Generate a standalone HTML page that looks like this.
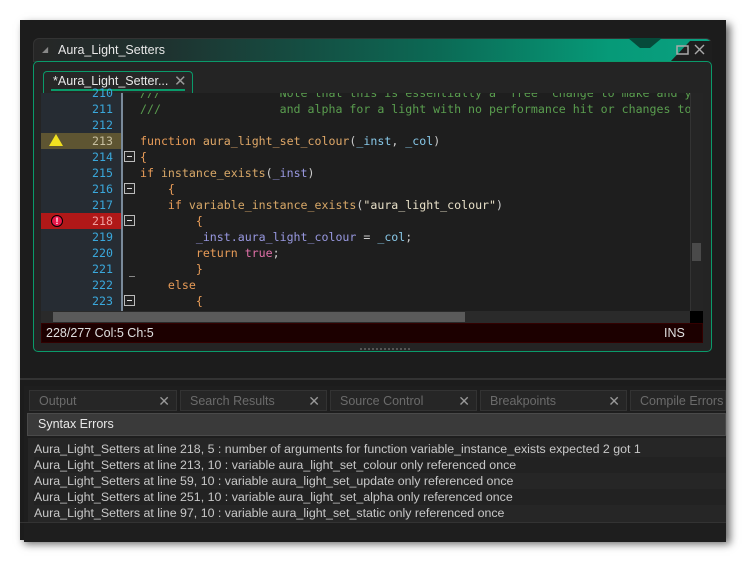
<!DOCTYPE html>
<html><head><meta charset="utf-8"><style>
*{margin:0;padding:0;box-sizing:border-box}
body{width:746px;height:561px;background:#fff;position:relative;overflow:hidden;font-family:"Liberation Sans","DejaVu Sans",sans-serif}
.abs{position:absolute}
#outer{left:20px;top:20px;width:706px;height:520px;background:#1c1c1c;box-shadow:4px 4px 8px rgba(0,0,0,.6)}
#title{left:33px;top:38px;width:679px;height:24px;border-radius:6px 6px 0 0;background:linear-gradient(90deg,#262626 0%,#1e3330 20%,#0b6a55 60%,#069a78 85%,#0aa080 100%);border:1px solid #333}
#title span{position:absolute;left:24px;top:4px;color:#e8e8e8;font-size:12.5px}
#panel{left:33px;top:61px;width:679px;height:291px;background:#242424;border:1.5px solid #0a9a6a;border-radius:5px}
.mono{font-family:"DejaVu Sans Mono","Liberation Mono",monospace;font-size:11.6px;white-space:pre}
.ln{position:absolute;left:41px;width:72px;text-align:right;color:#3aa8dc;height:16px;line-height:16px}
.cl{position:absolute;left:140px;height:16px;line-height:16px;color:#e89c58}
.fold{position:absolute;left:124px;width:11px;height:11px;border:1px solid #bbb;background:#222}
.fold:after{content:"";position:absolute;left:2px;top:4px;width:5px;height:1px;background:#ddd}
.tab{position:absolute;top:390px;height:21px;background:#262626;color:#6b6b6b;font-size:12.5px;line-height:20px;padding-left:9px;border:1px solid #333}
.tab b{position:absolute;right:6px;top:0;font-weight:normal;color:#999;font-size:14px}
.msg{position:absolute;left:34px;color:#c8c8c8;font-size:12.4px;height:16px;line-height:16px;width:692px;white-space:nowrap}
</style></head><body>
<div id="outer" class="abs"></div>
<div id="title" class="abs"><span style="left:8px;top:6px;font-size:8px;color:#888">◢</span><span>Aura_Light_Setters</span></div>
<svg class="abs" style="left:620px;top:38px" width="92" height="24"><polygon points="8,0 42,0 30,10 20,10" fill="#064a3a"/><polygon points="50,24 70,3 92,3 92,24" fill="#1e1e1e"/>
<rect x="57" y="8" width="11" height="8" fill="none" stroke="#aaa" stroke-width="1.5"/><path d="M75 7l9 9M84 7l-9 9" stroke="#aaa" stroke-width="1.4"/></svg>
<div id="panel" class="abs"></div>
<div class="abs" style="left:43px;top:71px;width:150px;height:22px;background:#262626;border:1px solid #0a9a6a;border-bottom:none;border-radius:4px 4px 0 0"></div>
<div class="abs" style="left:53px;top:74px;color:#e8e8e8;font-size:12.5px">*Aura_Light_Setter...</div>
<div class="abs" style="left:174px;top:72px;color:#999;font-size:15px">✕</div>
<div class="abs" style="left:51px;top:89px;width:134px;height:2px;background:#0a9a6a"></div>
<div class="abs" style="left:41px;top:93px;width:80px;height:218px;background:#262c33"></div>
<div class="abs" style="left:121px;top:93px;width:2px;height:218px;background:#7a8a9a"></div>
<div class="abs" style="left:129px;top:93px;width:1px;height:218px;background:#888"></div>
<div class="abs" style="left:123px;top:93px;width:567px;height:218px;background:#1e1e1e"></div>
<div class="abs" style="left:41px;top:133px;width:80px;height:16px;background:#5e5532"></div>
<div class="abs" style="left:49px;top:134px;width:0;height:0;border-left:7px solid transparent;border-right:7px solid transparent;border-bottom:12px solid #f0e020"></div>
<div class="abs" style="left:41px;top:213px;width:80px;height:16px;background:#b01818"></div>
<div class="abs" style="left:51px;top:215px;width:12px;height:12px;border-radius:50%;background:#e8184a;border:1px solid #000;color:#fff;font-size:9px;font-weight:bold;text-align:center;line-height:10px">!</div>
<div class="mono">
<div class="ln" style="top:85px">210</div><div class="ln" style="top:101px">211</div><div class="ln" style="top:117px">212</div><div class="ln" style="top:133px;color:#c8c0a0">213</div><div class="ln" style="top:149px">214</div><div class="ln" style="top:165px">215</div><div class="ln" style="top:181px">216</div><div class="ln" style="top:197px">217</div><div class="ln" style="top:213px;color:#f0a0a0">218</div><div class="ln" style="top:229px">219</div><div class="ln" style="top:245px">220</div><div class="ln" style="top:261px">221</div><div class="ln" style="top:277px">222</div><div class="ln" style="top:293px">223</div>
</div>
<div class="abs" style="left:123px;top:93px;width:567px;height:218px;overflow:hidden">
<div class="mono" style="position:relative;left:-123px;top:-93px">
<div class="cl" style="top:85px;color:#5a9e4f">///                 Note that this is essentially a "free" change to make and y</div>
<div class="cl" style="top:101px;color:#5a9e4f">///                 and alpha for a light with no performance hit or changes to</div>
<div class="cl" style="top:133px">function <span style="color:#e0a868">aura_light_set_colour</span><span style="color:#ccc">(</span><span style="color:#88c8e8">_inst</span><span style="color:#ccc">, </span><span style="color:#88c8e8">_col</span><span style="color:#ccc">)</span></div>
<div class="cl" style="top:149px">{</div>
<div class="cl" style="top:165px">if <span style="color:#d8a868">instance_exists</span><span style="color:#ccc">(</span><span style="color:#9898e0">_inst</span><span style="color:#ccc">)</span></div>
<div class="cl" style="top:181px">    {</div>
<div class="cl" style="top:197px">    if <span style="color:#d8a868">variable_instance_exists</span><span style="color:#ccc">(</span><span style="color:#e8e0c8">"aura_light_colour"</span><span style="color:#ccc">)</span></div>
<div class="cl" style="top:213px">        {</div>
<div class="cl" style="top:229px;color:#9898e0">        _inst.aura_light_colour <span style="color:#ccc">=</span> <span style="color:#88c8e8">_col</span><span style="color:#ccc">;</span></div>
<div class="cl" style="top:245px">        return <span style="color:#e070a8">true</span><span style="color:#ccc">;</span></div>
<div class="cl" style="top:261px">        }</div>
<div class="cl" style="top:277px">    else</div>
<div class="cl" style="top:293px">        {</div>
</div></div>
<div class="fold" style="top:151px"></div><div class="fold" style="top:183px"></div><div class="fold" style="top:215px"></div><div class="fold" style="top:295px"></div>
<div class="abs" style="left:129px;top:276px;width:6px;height:1px;background:#888"></div>
<div class="abs" style="left:690px;top:93px;width:13px;height:218px;background:#252525;border-left:1px solid #333"></div>
<div class="abs" style="left:692px;top:243px;width:9px;height:18px;background:#4a4a4a"></div>
<div class="abs" style="left:41px;top:311px;width:649px;height:12px;background:#2a2a2a"></div>
<div class="abs" style="left:53px;top:312px;width:412px;height:10px;background:#5a5a5a"></div>
<div class="abs" style="left:690px;top:311px;width:13px;height:12px;background:#000"></div>
<div class="abs" style="left:41px;top:323px;width:662px;height:20px;background:#1c0000;border:1px solid #300"></div>
<div class="abs" style="left:46px;top:326px;color:#e0e0e0;font-size:12.5px">228/277 Col:5 Ch:5</div>
<div class="abs" style="left:664px;top:326px;color:#e0e0e0;font-size:12.5px">INS</div>
<div class="abs" style="left:360px;top:348px;width:50px;height:2px;border-top:2px dotted #555"></div>
<div class="abs" style="left:20px;top:378px;width:706px;height:2px;background:#333"></div>
<div class="abs" style="left:24px;top:386px;width:702px;height:156px;background:#1e1e1e"></div>
<div class="tab" style="left:29px;width:148px">Output<b>✕</b></div>
<div class="tab" style="left:180px;width:147px">Search Results<b>✕</b></div>
<div class="tab" style="left:330px;width:147px">Source Control<b>✕</b></div>
<div class="tab" style="left:480px;width:147px">Breakpoints<b>✕</b></div>
<div class="tab" style="left:630px;width:96px">Compile Errors</div>
<div class="abs" style="left:27px;top:413px;width:699px;height:23px;background:#3a3a3a;border:1px solid #4a4a4a;color:#e8e8e8;font-size:12.5px;line-height:21px;padding-left:10px">Syntax Errors</div>
<div class="abs" style="left:28px;top:438px;width:698px;height:84px;background:#262626"></div>
<div class="msg" style="top:441px">Aura_Light_Setters at line 218, 5 : number of arguments for function variable_instance_exists expected 2 got 1</div>
<div class="msg" style="top:457px;background:#222">Aura_Light_Setters at line 213, 10 : variable aura_light_set_colour only referenced once</div>
<div class="msg" style="top:473px">Aura_Light_Setters at line 59, 10 : variable aura_light_set_update only referenced once</div>
<div class="msg" style="top:489px;background:#222">Aura_Light_Setters at line 251, 10 : variable aura_light_set_alpha only referenced once</div>
<div class="abs" style="left:28px;top:505px;width:698px;height:15px;overflow:hidden"><div class="msg" style="top:0;left:6px">Aura_Light_Setters at line 97, 10 : variable aura_light_set_static only referenced once</div></div>
<div class="abs" style="left:20px;top:522px;width:706px;height:1px;background:#333"></div>
</body></html>
